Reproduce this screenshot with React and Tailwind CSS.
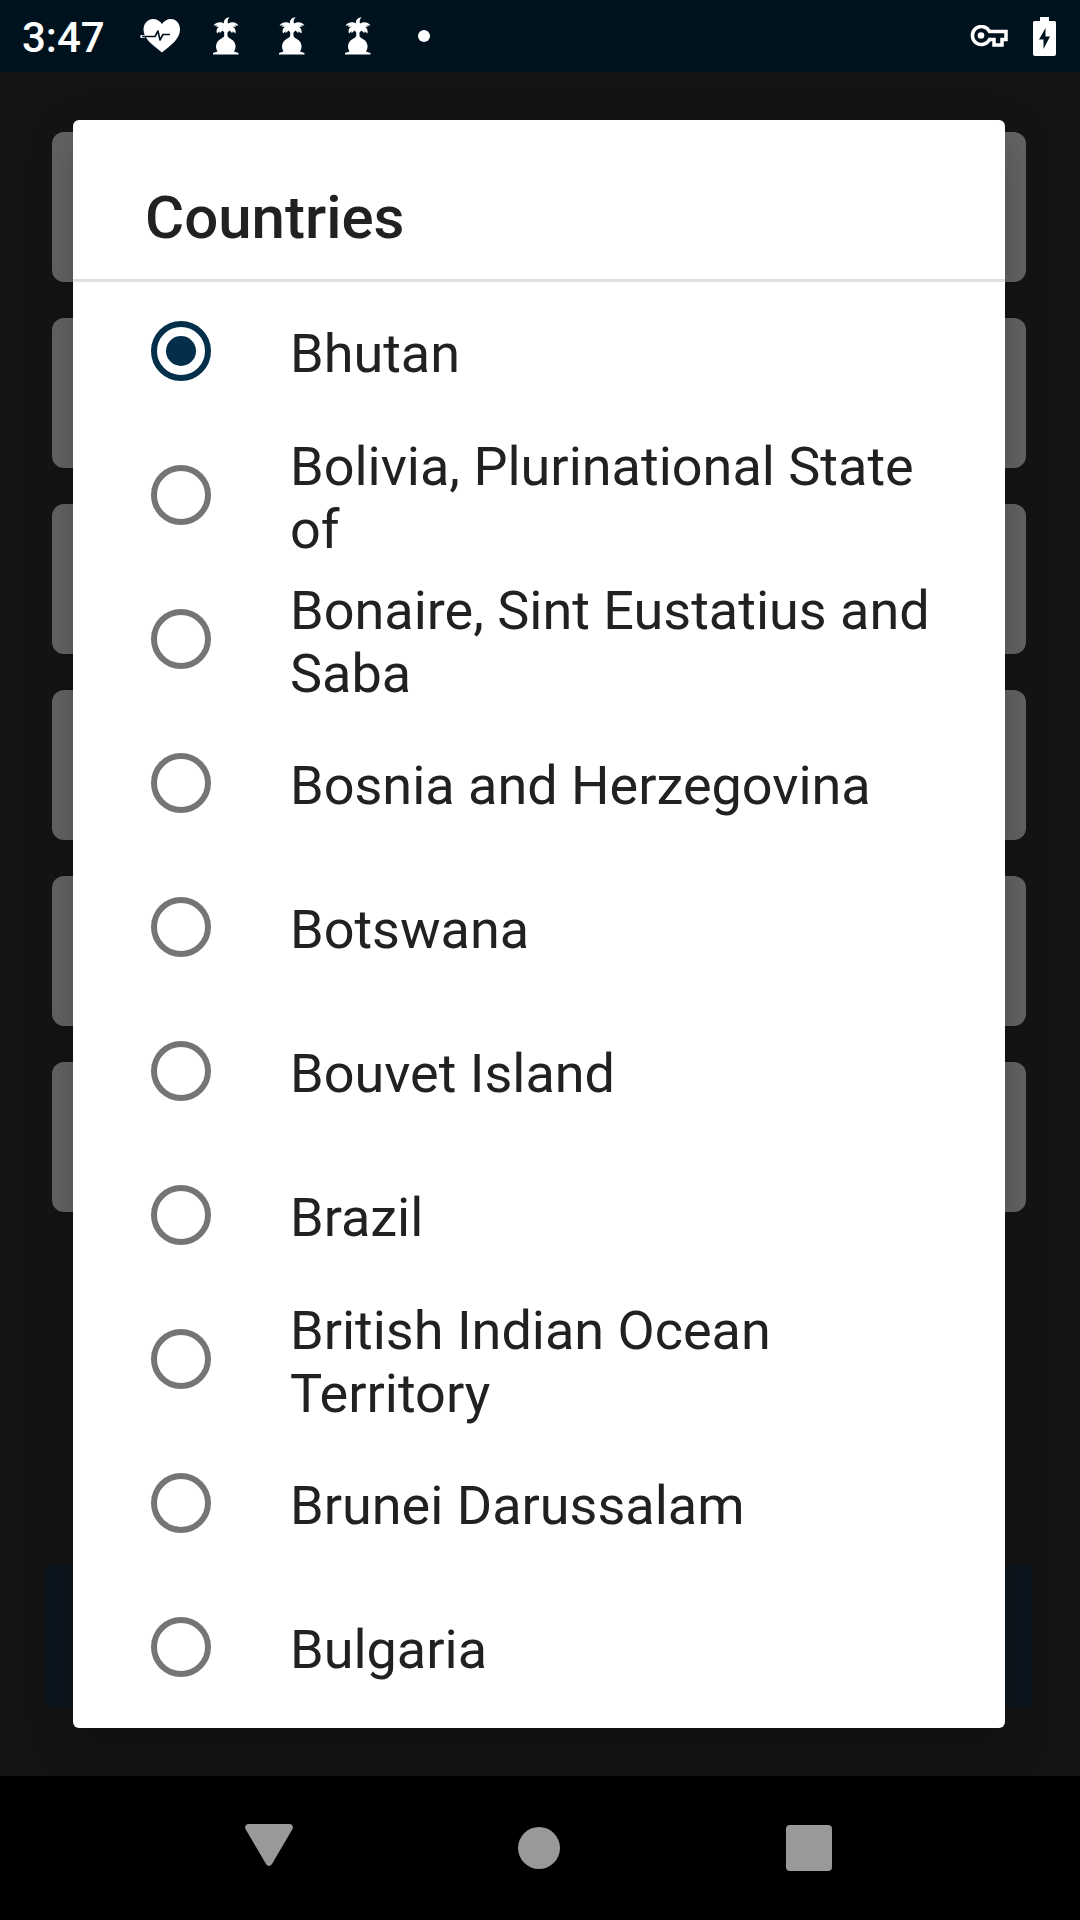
const COUNTRIES = [
  "Bhutan",
  "Bolivia, Plurinational State of",
  "Bonaire, Sint Eustatius and Saba",
  "Bosnia and Herzegovina",
  "Botswana",
  "Bouvet Island",
  "Brazil",
  "British Indian Ocean Territory",
  "Brunei Darussalam",
  "Bulgaria",
];

function PalmIcon() {
  return (
    <svg width="26" height="38" viewBox="0 0 26 38" fill="#fff" aria-hidden="true">
      <path d="M16.5 0C12.5.8 10.4 3.4 11 6.6 8.500 4.600 3.500 4.400 0.500 8.600L4.500 8.400 2.400 9.800 6 9.800C3.600 11.400 3 13.800 4 16.500L6.500 14.200 6.600 16.200 9.600 13.600 11.200 15.600V18.500C11 20 10 20.600 8 21.800 2.500 24.600 2 30.500 4.500 34.500L0 36V37.500H25.500V36L21 34.500C23.800 30.500 23 24.600 17.500 21.800 15.500 20.600 14.600 20 14.500 18.500V15.600L16.500 13.600 19.300 16.200 19.600 14.200 22.500 16.500C23 13.800 22.300 11.400 20 9.800L23.500 9.800 21.500 8.400 25.500 8.600C22.500 4.400 18.500 4.600 15 6.600 14.200 4.600 14.800 2.200 16.500 0Z" />
    </svg>
  );
}

function HeartIcon() {
  return (
    <svg width="40" height="34" viewBox="0 0 40 34" aria-hidden="true">
      <path fill="#fff" d="M22 33.500C12 25.500 3.500 19.500 3.500 10.500 3.500 4.500 8 0 13 0 17 0 20 2 22 5 24 2 27 0 31 0 36 0 40 4.500 40 10.500 40 19.500 32 25.500 22 33.500Z" />
      <path fill="none" stroke="#fff" strokeWidth="3" d="M.5 17.500H5" />
      <path fill="none" stroke="#00121e" strokeWidth="1.600" strokeLinejoin="round" d="M2 17.500H15L18 12 20 21 23 15.500H30" />
    </svg>
  );
}

function KeyIcon() {
  return (
    <svg width="38" height="22" viewBox="0 0 38 22" aria-hidden="true">
      <path fill="none" stroke="#fff" strokeWidth="3.500" d="M19.500 6.500A9 9 0 1 0 19.500 14.500H24V20H32V14.500H36V6.500Z" />
      <circle cx="11" cy="10.500" r="3.300" fill="#fff" />
    </svg>
  );
}

function BatteryIcon() {
  return (
    <svg width="23" height="39" viewBox="0 0 23 39" aria-hidden="true">
      <path fill="#fff" d="M7 0H16V4H21.500Q23 4 23 5.500V37Q23 39 21 39H2Q0 39 0 37V5.500Q0 4 1.500 4H7Z" />
      <path fill="#00121e" d="M12.500 11 6 22.500H10.500V32L17 19.500H12.500Z" />
    </svg>
  );
}

function StatusBar() {
  return (
    <header className="flex h-[72px] items-center bg-[#00121e] pr-6 pl-[22px] text-white">
      <time className="w-[118px] pt-1 text-[42px] leading-[50px] font-medium">3:47</time>
      <HeartIcon />
      <div className="ml-[33px] flex items-center gap-10">
        <PalmIcon />
        <PalmIcon />
        <PalmIcon />
      </div>
      <span className="ml-[47px] size-3 rounded-full bg-white" />
      <div className="ml-auto flex items-center gap-[25px]">
        <KeyIcon />
        <BatteryIcon />
      </div>
    </header>
  );
}

function Backdrop() {
  return (
    <div className="col-start-1 row-start-1 flex flex-col pt-[60px] pb-[68px]" aria-hidden="true">
      <div className="mr-[54px] ml-[52px] flex flex-col gap-9">
        {[1, 2, 3, 4, 5, 6].map((n) => (
          <div key={n} className="h-[150px] rounded-xl bg-[#656565]" />
        ))}
      </div>
      <div className="mt-auto mr-12 ml-[46px] h-36 bg-[#0c161e]" />
    </div>
  );
}

function CountryOption({ name, selected }) {
  return (
    <label className="flex h-36 items-center pr-[60px] pb-px pl-[78px]">
      <input
        type="radio"
        name="country"
        defaultChecked={selected}
        className="mb-[5px] size-[60px] shrink-0 appearance-none rounded-full border-6 border-[#757575] bg-clip-content p-[9px] checked:border-[#032f4a] checked:bg-[#032f4a]"
      />
      <span className="ml-[79px] text-[54px] leading-[63px]">{name}</span>
    </label>
  );
}

function CountryDialog() {
  return (
    <div className="z-10 col-start-1 row-start-1 pt-12 pr-[75px] pb-12 pl-[73px]">
      <div
        role="dialog"
        aria-labelledby="dialog-title"
        className="rounded-md bg-white pb-1.5 text-[#212121] shadow-[0_16px_48px_rgba(0,0,0,0.25)]"
      >
        <h1
          id="dialog-title"
          className="border-b-3 border-[#e0e0e0] px-[72px] pt-[63px] pb-[26px] text-[60px] leading-[70px] font-medium"
        >
          Countries
        </h1>
        {COUNTRIES.map((name, i) => (
          <CountryOption key={name} name={name} selected={i === 0} />
        ))}
      </div>
    </div>
  );
}

function NavigationBar() {
  return (
    <nav className="flex h-36 items-center justify-center gap-[178px] bg-black pr-0.5">
      <button type="button" aria-label="Back" className="flex size-23 items-center justify-center">
        <svg width="48" height="42" viewBox="0 0 48 42" className="mb-1.5" aria-hidden="true">
          <path fill="#999" d="M3 0H45Q49 1 47.500 5L27 40Q24 44 21 40L.5 5Q-1 1 3 0Z" />
        </svg>
      </button>
      <button type="button" aria-label="Home" className="flex size-23 items-center justify-center">
        <span className="size-[42px] rounded-full bg-[#999]" />
      </button>
      <button type="button" aria-label="Recent apps" className="flex size-23 items-center justify-center">
        <span className="size-[46px] rounded bg-[#999]" />
      </button>
    </nav>
  );
}

export default function App() {
  return (
    <div className="flex min-h-screen flex-col bg-[#141414] font-['Roboto',sans-serif]">
      <StatusBar />
      <main className="grid grow">
        <Backdrop />
        <CountryDialog />
      </main>
      <NavigationBar />
    </div>
  );
}
